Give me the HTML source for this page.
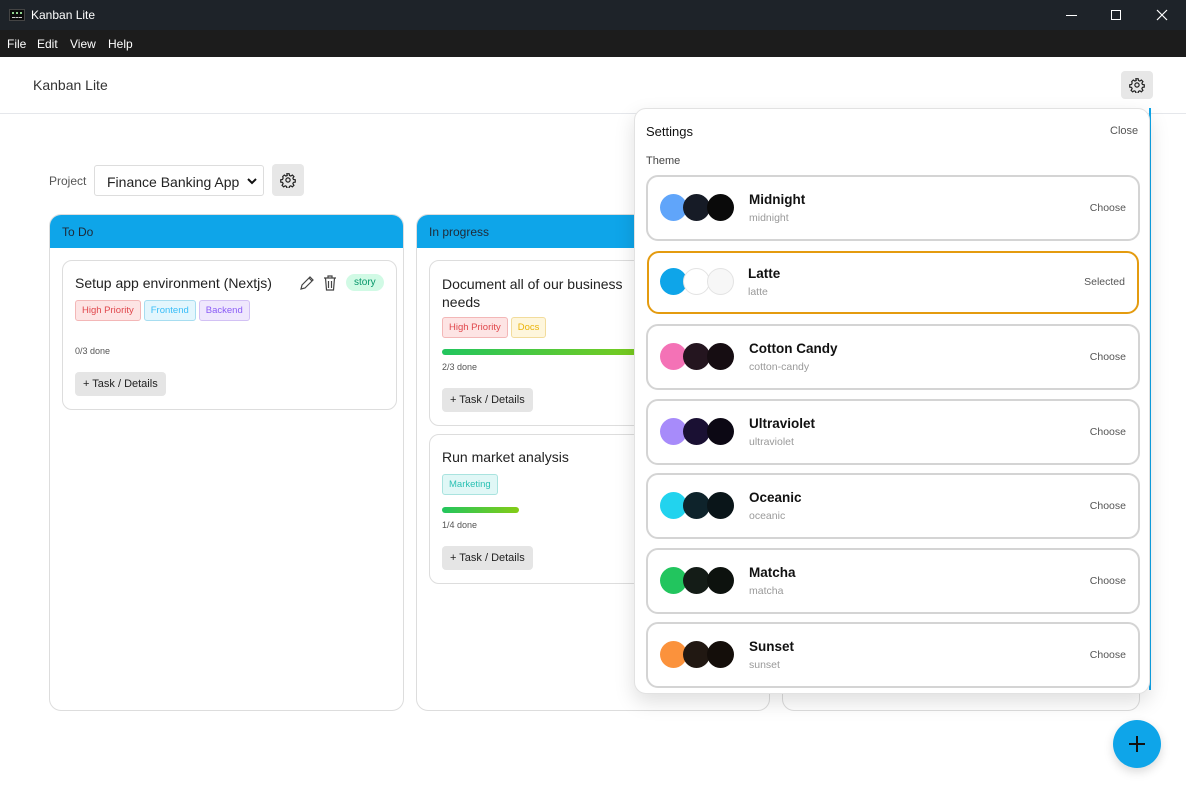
<!DOCTYPE html>
<html><head><meta charset="utf-8"><style>
*{box-sizing:border-box;margin:0;padding:0}
body{width:1186px;height:793px;overflow:hidden;background:#fff;font-family:"Liberation Sans",sans-serif;position:relative;color:#1f2937}
.a{position:absolute}
.title{left:0;top:0;width:1186px;height:30px;background:#1e2329;color:#fff;font-size:12px}
.menu{left:0;top:30px;width:1186px;height:27px;background:#1c1c1c;color:#fff;font-size:12px}
.menu span{position:absolute;top:7px}
.hdr{left:0;top:57px;width:1186px;height:57px;border-bottom:1px solid #e5e7eb;background:#fff}
.gbtn{background:#e7e7e7;border-radius:4px;display:flex;align-items:center;justify-content:center}
.col{border:1px solid #ddd;border-radius:12px;background:#fff;overflow:hidden}
.colh{height:33px;background:#0ea5e9;color:#1f2937;font-size:12px;padding:10px 12px}
.card{border:1px solid #ddd;border-radius:10px;background:#fff}
.ct{font-size:14px;color:#222}
.tag{display:inline-block;font-size:9.5px;padding:4px 6px;border-radius:3px;border:1px solid;margin-right:3px}
.hp{background:#fde4e4;border-color:#f3b7b7;color:#e0474c}
.fe{background:#e3f6fd;border-color:#a7ddf0;color:#38bdf8}
.be{background:#efe7fd;border-color:#d2c1f4;color:#8b5cf6}
.dc{background:#fef6dc;border-color:#f2dc9c;color:#eab308}
.mk{background:#e0f7f6;border-color:#a9e3df;color:#2cc1b4}
.done{font-size:9px;color:#555}
.btn{background:#e5e5e5;border-radius:4px;font-size:11px;color:#222;padding:6px 8px;display:inline-block}
.bar{height:6px;border-radius:3px;background:linear-gradient(90deg,#22c55e,#84cc16)}
.panel{left:634px;top:108px;width:516px;height:586px;background:#fff;border:1px solid #e2e2e2;border-radius:12px;box-shadow:0 8px 20px rgba(0,0,0,.13)}
.th{left:11px;width:494px;height:66px;border:2px solid #d4d4d4;border-radius:12px;background:#fff}
.th .c{position:absolute;top:17px;width:27px;height:27px;border-radius:50%}
.th .n{position:absolute;left:101px;top:15px;font-size:13.5px;color:#111;font-weight:bold;font-weight:600}
.th .s{position:absolute;left:101px;top:35px;font-size:10.5px;color:#999}
.th .r{position:absolute;right:12px;top:25px;font-size:10.5px;color:#555}
</style></head><body>
<div class="a title">
 <div class="a" style="left:9px;top:9px;width:16px;height:12px;background:#0c0c0c;border:1px solid #444"><div class="a" style="left:2px;top:2px;width:10px;height:2px;border-top:2px dotted #8fd18f"></div><div class="a" style="left:2px;top:7px;width:10px;border-top:1px dashed #ccc"></div></div>
 <span class="a" style="left:31px;top:8px">Kanban Lite</span>
 <div class="a" style="left:1066px;top:15px;width:11px;height:1px;background:#fff"></div>
 <div class="a" style="left:1111px;top:10px;width:10px;height:10px;border:1px solid #fff"></div>
 <svg class="a" style="left:1156px;top:9px" width="12" height="12"><path d="M1 1L11 11M11 1L1 11" stroke="#fff" stroke-width="1.2"/></svg>
</div>
<div class="a menu"><span style="left:7px">File</span><span style="left:37px">Edit</span><span style="left:70px">View</span><span style="left:108px">Help</span></div>
<div class="a hdr"><span class="a" style="left:33px;top:20px;font-size:14px;color:#333">Kanban Lite</span>
 <div class="a gbtn" style="left:1121px;top:14px;width:32px;height:28px"><svg width="16" height="16" viewBox="0 0 24 24" fill="none" stroke="#222" stroke-width="1.8"><path d="M10.3 2.5h3.4l.5 2.7 2 .9 2.3-1.6 2.4 2.4-1.6 2.3.9 2 2.7.5v3.4l-2.7.5-.9 2 1.6 2.3-2.4 2.4-2.3-1.6-2 .9-.5 2.7h-3.4l-.5-2.7-2-.9-2.3 1.6-2.4-2.4 1.6-2.3-.9-2-2.7-.5v-3.4l2.7-.5.9-2L4.1 6.9l2.4-2.4 2.3 1.6 2-.9z"/><circle cx="12" cy="12" r="3.2"/></svg></div>
</div>
<span class="a" style="left:49px;top:174px;font-size:12px;color:#555">Project</span>
<div class="a" style="left:94px;top:165px;width:170px;height:31px;border:1px solid #ddd;border-radius:3px;font-size:14px;color:#222;padding:8px 12px">Finance Banking App<svg class="a" style="left:152px;top:11px" width="10" height="8"><path d="M1 2l4 4 4-4" stroke="#111" stroke-width="2" fill="none"/></svg></div>
<div class="a gbtn" style="left:272px;top:164px;width:32px;height:32px"><svg width="16" height="16" viewBox="0 0 24 24" fill="none" stroke="#222" stroke-width="1.8"><path d="M10.3 2.5h3.4l.5 2.7 2 .9 2.3-1.6 2.4 2.4-1.6 2.3.9 2 2.7.5v3.4l-2.7.5-.9 2 1.6 2.3-2.4 2.4-2.3-1.6-2 .9-.5 2.7h-3.4l-.5-2.7-2-.9-2.3 1.6-2.4-2.4 1.6-2.3-.9-2-2.7-.5v-3.4l2.7-.5.9-2L4.1 6.9l2.4-2.4 2.3 1.6 2-.9z"/><circle cx="12" cy="12" r="3.2"/></svg></div>

<div class="a col" style="left:49px;top:214px;width:355px;height:497px"><div class="colh">To Do</div></div>
<div class="a card" style="left:62px;top:260px;width:335px;height:150px">
 <div class="a ct" style="left:12px;top:14px">Setup app environment (Nextjs)</div>
 <svg class="a" style="left:236px;top:14px" width="16" height="16" viewBox="0 0 16 16" fill="none" stroke="#444" stroke-width="1.2"><path d="M2 14l1-4 8-8 3 3-8 8zM10 3l3 3"/></svg>
 <svg class="a" style="left:260px;top:14px" width="14" height="16" viewBox="0 0 14 16" fill="none" stroke="#444" stroke-width="1.2"><path d="M1 3h12M5 3V1h4v2M2.5 3l1 12h7l1-12M5.5 6v7M8.5 6v7"/></svg>
 <div class="a" style="left:283px;top:13px;background:#d1fae5;color:#059669;font-size:10px;padding:3px 8px;border-radius:9px">story</div>
 <div class="a" style="left:12px;top:39px;white-space:nowrap"><span class="tag hp">High Priority</span><span class="tag fe">Frontend</span><span class="tag be">Backend</span></div>
 <div class="a done" style="left:12px;top:85px">0/3 done</div>
 <div class="a btn" style="left:12px;top:111px">+ Task / Details</div>
</div>

<div class="a col" style="left:416px;top:214px;width:354px;height:497px"><div class="colh">In progress</div></div>
<div class="a card" style="left:429px;top:260px;width:335px;height:166px">
 <div class="a ct" style="left:12px;top:14px;line-height:18px">Document all of our business<br>needs</div>
 <div class="a" style="left:12px;top:56px;white-space:nowrap"><span class="tag hp">High Priority</span><span class="tag dc">Docs</span></div>
 <div class="a bar" style="left:12px;top:88px;width:220px"></div>
 <div class="a done" style="left:12px;top:101px">2/3 done</div>
 <div class="a btn" style="left:12px;top:127px">+ Task / Details</div>
</div>
<div class="a card" style="left:429px;top:434px;width:335px;height:150px">
 <div class="a ct" style="left:12px;top:14px">Run market analysis</div>
 <div class="a" style="left:12px;top:39px"><span class="tag mk">Marketing</span></div>
 <div class="a bar" style="left:12px;top:72px;width:77px"></div>
 <div class="a done" style="left:12px;top:85px">1/4 done</div>
 <div class="a btn" style="left:12px;top:111px">+ Task / Details</div>
</div>
<div class="a col" style="left:782px;top:214px;width:358px;height:497px"></div>
<div class="a" style="left:1149px;top:108px;width:2px;height:582px;background:#0ea5e9"></div>

<div class="a panel">
 <div class="a" style="left:11px;top:15px;font-size:13px;color:#111">Settings</div>
 <div class="a" style="left:475px;top:16px;font-size:11px;color:#555">Close</div>
 <div class="a" style="left:11px;top:46px;font-size:11px;color:#444">Theme</div>
 <div class="a th" style="top:66px"><div class="c" style="left:12px;background:#60a5fa"></div><div class="c" style="left:35px;background:#161b26"></div><div class="c" style="left:59px;background:#0a0a0a"></div><div class="n">Midnight</div><div class="s">midnight</div><div class="r">Choose</div></div>
 <div class="a th" style="top:142px;left:12px;width:492px;height:63px;border-color:#e49b0f"><div class="c" style="left:11px;top:15px;background:#0ea5e9"></div><div class="c" style="left:34px;top:15px;background:#fff;border:1px solid #e3e3e3"></div><div class="c" style="left:58px;top:15px;background:#f7f7f7;border:1px solid #e3e3e3"></div><div class="n" style="left:99px;top:13px">Latte</div><div class="s" style="left:99px;top:33px">latte</div><div class="r" style="top:23px">Selected</div></div>
 <div class="a th" style="top:215px"><div class="c" style="left:12px;background:#f472b6"></div><div class="c" style="left:35px;background:#24151f"></div><div class="c" style="left:59px;background:#160d12"></div><div class="n">Cotton Candy</div><div class="s">cotton-candy</div><div class="r">Choose</div></div>
 <div class="a th" style="top:290px"><div class="c" style="left:12px;background:#a78bfa"></div><div class="c" style="left:35px;background:#1a1033"></div><div class="c" style="left:59px;background:#0c0814"></div><div class="n">Ultraviolet</div><div class="s">ultraviolet</div><div class="r">Choose</div></div>
 <div class="a th" style="top:364px"><div class="c" style="left:12px;background:#22d3ee"></div><div class="c" style="left:35px;background:#0e232b"></div><div class="c" style="left:59px;background:#0a1519"></div><div class="n">Oceanic</div><div class="s">oceanic</div><div class="r">Choose</div></div>
 <div class="a th" style="top:439px"><div class="c" style="left:12px;background:#22c55e"></div><div class="c" style="left:35px;background:#141c17"></div><div class="c" style="left:59px;background:#0d120e"></div><div class="n">Matcha</div><div class="s">matcha</div><div class="r">Choose</div></div>
 <div class="a th" style="top:513px"><div class="c" style="left:12px;background:#fb923c"></div><div class="c" style="left:35px;background:#211812"></div><div class="c" style="left:59px;background:#140e0a"></div><div class="n">Sunset</div><div class="s">sunset</div><div class="r">Choose</div></div>
</div>

<div class="a" style="left:1113px;top:720px;width:48px;height:48px;border-radius:50%;background:#0ea5e9;box-shadow:0 4px 10px rgba(0,0,0,.15)"><div class="a" style="left:16px;top:23px;width:16px;height:2px;background:#111"></div><div class="a" style="left:23px;top:16px;width:2px;height:16px;background:#111"></div></div>
</body></html>
